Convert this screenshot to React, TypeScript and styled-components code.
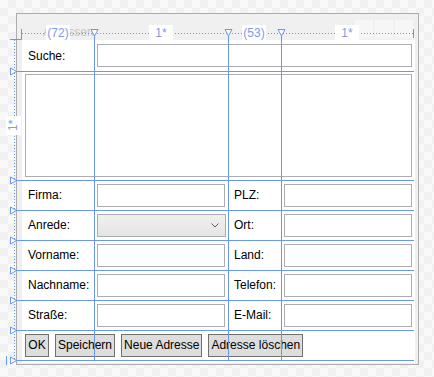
import styled, { createGlobalStyle } from 'styled-components';

const BLUE = '#6a97ee';

const GlobalStyle = createGlobalStyle`
  html, body {
    margin: 0;
    padding: 0;
  }
  body {
    font-family: 'Segoe UI', 'Liberation Sans', Arial, sans-serif;
    font-size: 12px;
    color: #000;
  }
`;

// designer adorner geometry (page pixels)
const colLines = [94, 228, 281];
const rowLines = [71, 180, 210, 240, 270, 300, 330, 360];
const colLabels = [
  { text: '(72)', center: 58 },
  { text: '1*', center: 161 },
  { text: '(53)', center: 254 },
  { text: '1*', center: 347 },
];

export default function App() {
  return (
    <>
      <GlobalStyle />
      <Page>
        <Window>
          <TitleBar>
            <WindowTitle>Adressen</WindowTitle>
            <CaptionButtons>
              <CaptionButton />
              <CaptionButton />
              <CaptionButton />
            </CaptionButtons>
          </TitleBar>
          <Client>
            <FormGrid>
              <FieldLabel>Suche:</FieldLabel>
              <TextBox $span={3} />

              <ListBox />

              <FieldLabel>Firma:</FieldLabel>
              <TextBox />
              <FieldLabel>PLZ:</FieldLabel>
              <TextBox />

              <FieldLabel>Anrede:</FieldLabel>
              <ComboBox>
                <ChevronIcon />
              </ComboBox>
              <FieldLabel>Ort:</FieldLabel>
              <TextBox />

              <FieldLabel>Vorname:</FieldLabel>
              <TextBox />
              <FieldLabel>Land:</FieldLabel>
              <TextBox />

              <FieldLabel>Nachname:</FieldLabel>
              <TextBox />
              <FieldLabel>Telefon:</FieldLabel>
              <TextBox />

              <FieldLabel>Straße:</FieldLabel>
              <TextBox />
              <FieldLabel>E-Mail:</FieldLabel>
              <TextBox />

              <ButtonBar>
                <Button>OK</Button>
                <Button>Speichern</Button>
                <Button>Neue Adresse</Button>
                <Button>Adresse löschen</Button>
              </ButtonBar>
            </FormGrid>
          </Client>
        </Window>

        <Adorners width="434" height="377">
          {/* top ruler */}
          <line x1="22" y1="33.5" x2="414" y2="33.5" stroke={BLUE} strokeDasharray="1 2" />
          <line x1="413.5" y1="29" x2="413.5" y2="38" stroke={BLUE} />
          <polyline points="10,39.5 21.5,39.5 21.5,29" fill="none" stroke={BLUE} />
          {/* left ruler */}
          <line x1="14.5" y1="40" x2="14.5" y2="362" stroke={BLUE} strokeDasharray="1 2" />

          {rowLines.map(y => (
            <g key={y}>
              <line x1="16" y1={y + 0.5} x2="414" y2={y + 0.5} stroke={BLUE} />
              <polygon
                points={`10.5,${y - 3} 10.5,${y + 4} 16.5,${y + 0.5}`}
                fill="#fff"
                stroke={BLUE}
              />
            </g>
          ))}
          <line x1="6.5" y1="356" x2="6.5" y2="365" stroke={BLUE} />

          {colLines.map(x => (
            <g key={x}>
              <line x1={x + 0.5} y1="36" x2={x + 0.5} y2="360" stroke={BLUE} />
              <polygon
                points={`${x - 3},29.5 ${x + 4},29.5 ${x + 0.5},36`}
                fill="#fff"
                stroke={BLUE}
              />
            </g>
          ))}
        </Adorners>

        {colLabels.map(l => (
          <RulerLabel key={l.center} style={{ left: l.center - 12 }}>
            {l.text}
          </RulerLabel>
        ))}
        <RowRulerLabel>1*</RowRulerLabel>
      </Page>
    </>
  );
}

function ChevronIcon() {
  return (
    <svg width="8" height="5" viewBox="0 0 8 5">
      <polyline points="0.5,0.5 4,4 7.5,0.5" fill="none" stroke="#606060" strokeWidth="1" />
    </svg>
  );
}

const Page = styled.div`
  position: relative;
  width: 434px;
  height: 377px;
  overflow: hidden;
  box-sizing: border-box;
  padding: 13px 0 0 16px;
  background-color: #f9f9f9;
  background-image: conic-gradient(
    #f1f1f1 25%,
    transparent 0 50%,
    #f1f1f1 0 75%,
    transparent 0
  );
  background-size: 16px 16px;
`;

const Window = styled.div`
  width: 403px;
  height: 352px;
  box-sizing: border-box;
  border: 1px solid #acacac;
  background: #f0f0f0;
  display: flex;
  flex-direction: column;
`;

const TitleBar = styled.div`
  height: 26px;
  display: flex;
  justify-content: space-between;
  align-items: flex-start;
  padding: 0 5px 0 26px;
`;

const WindowTitle = styled.div`
  margin-top: 10px;
  line-height: 16px;
  color: #c4c4c4;
`;

const CaptionButtons = styled.div`
  display: flex;
  gap: 2px;
  margin-top: 6px;
`;

const CaptionButton = styled.div`
  width: 18px;
  height: 18px;
  background: #f6f6f6;
`;

const Client = styled.div`
  flex: 1;
  margin: 0 3px 1px 5px;
  background: #fff;
`;

const FormGrid = styled.div`
  display: grid;
  grid-template-columns: 72px 1fr 53px 1fr;
  grid-template-rows: 31px 109px repeat(6, 30px);
  height: 320px;
`;

const FieldLabel = styled.div`
  display: flex;
  align-items: center;
  padding-left: 6px;
  white-space: nowrap;
`;

const TextBox = styled.div<{ $span?: number }>`
  grid-column: span ${p => p.$span ?? 1};
  align-self: center;
  height: 23px;
  margin: 0 3px;
  box-sizing: border-box;
  border: 1px solid #abadb3;
  background: #fff;
`;

const ListBox = styled.div`
  grid-column: 1 / -1;
  margin: 3px;
  border: 1px solid #abadb3;
  background: #fff;
`;

const ComboBox = styled.div`
  align-self: center;
  height: 23px;
  margin: 0 2px 0 3px;
  box-sizing: border-box;
  border: 1px solid #acacac;
  background: linear-gradient(#f0f0f0, #e5e5e5);
  display: flex;
  align-items: center;
  justify-content: flex-end;
  padding-right: 6px;
`;

const ButtonBar = styled.div`
  grid-column: 1 / -1;
  display: flex;
  align-items: center;
`;

const Button = styled.button`
  height: 23px;
  min-width: 24px;
  margin: 0 3px;
  padding: 0 2px;
  box-sizing: border-box;
  border: 1px solid #707070;
  border-radius: 0;
  background: #dddddd;
  font-family: inherit;
  font-size: 12px;
  color: #000;
`;

const Adorners = styled.svg`
  position: absolute;
  left: 0;
  top: 0;
  pointer-events: none;
`;

const RulerLabel = styled.div`
  position: absolute;
  top: 25px;
  width: 24px;
  height: 16px;
  display: flex;
  align-items: center;
  justify-content: center;
  background: #fff;
  color: #7f9be6;
  line-height: 16px;
`;

const RowRulerLabel = styled.div`
  position: absolute;
  left: 6px;
  top: 116px;
  width: 15px;
  height: 19px;
  background: #fff;
  color: #7f9be6;
  display: flex;
  align-items: center;
  justify-content: center;
  writing-mode: vertical-rl;
  transform: rotate(180deg);
  line-height: 15px;
`;
